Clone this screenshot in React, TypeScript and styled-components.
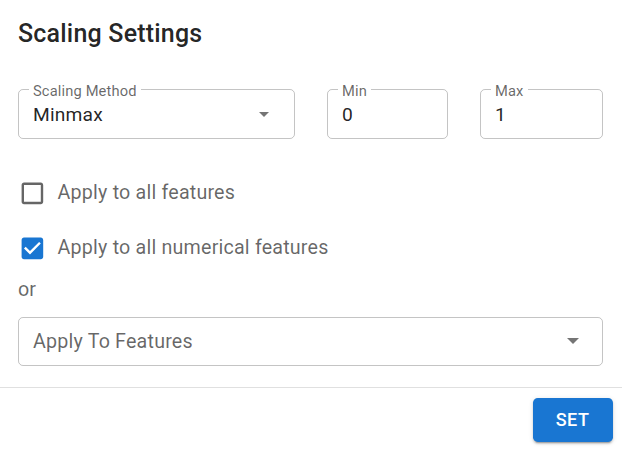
import React from "react";
import styled, { createGlobalStyle } from "styled-components";

const Global = createGlobalStyle`
  html, body { margin: 0; padding: 0; background: #fff; }
  body { font-family: Roboto, "Liberation Sans", Arial, sans-serif; }
  * { box-sizing: border-box; }
`;

const Dialog = styled.div`
  width: 622px;
  height: 452px;
  background: #fff;
  display: flex;
  flex-direction: column;
  font-family: Roboto, "Liberation Sans", Arial, sans-serif;
`;

const Title = styled.h2`
  margin: 0;
  padding: 18px 18px 0;
  font-size: 25px;
  line-height: 32px;
  font-weight: 500;
  letter-spacing: 0.2px;
  color: rgba(0, 0, 0, 0.87);
`;

const Content = styled.div`
  padding: 29px 19px 21px 18px;
  display: flex;
  flex-direction: column;
`;

const FieldRow = styled.div`
  display: grid;
  grid-template-columns: 277px 121px 1fr;
  column-gap: 32px;
  align-items: start;
`;

const Field = styled.fieldset`
  margin: 0;
  min-width: 0;
  padding: 4px 14px 12px;
  border: 1px solid rgba(0, 0, 0, 0.23);
  border-radius: 5px;
`;

const Legend = styled.legend`
  margin-left: -4px;
  padding: 4px 4px 0;
  font-size: 14.7px;
  line-height: 16px;
  color: rgba(0, 0, 0, 0.6);
  letter-spacing: 0.00938em;
`;

const ValueLine = styled.div<{ $padRight?: number }>`
  display: flex;
  align-items: center;
  justify-content: space-between;
  padding-right: ${(p) => p.$padRight ?? 0}px;
  font-size: 19.2px;
  line-height: 23px;
  color: rgba(0, 0, 0, 0.87);
  letter-spacing: 0.00938em;
`;

const Arrow = ({ w }: { w: number }) => (
  <svg width={w} height={w / 2} viewBox="0 0 10 5" style={{ display: "block" }}>
    <path d="M0 0 L5 5 L10 0 Z" fill="rgba(0,0,0,0.54)" />
  </svg>
);

const CheckRow = styled.label<{ $mt?: number }>`
  display: flex;
  align-items: center;
  margin-top: ${(p) => p.$mt ?? 0}px;
  font-size: 19.7px;
  line-height: 28.8px;
  color: rgba(0, 0, 0, 0.6);
  letter-spacing: 0.00938em;
`;

const CheckWrap = styled.span`
  display: inline-flex;
  padding: 10.8px;
  margin-left: -10.8px;
`;

const CheckIcon = ({ checked }: { checked: boolean }) => (
  <svg width="28.8" height="28.8" viewBox="0 0 24 24" style={{ display: "block" }}>
    {checked ? (
      <path
        fill="#1976d2"
        d="M19 3H5c-1.11 0-2 .9-2 2v14c0 1.1.89 2 2 2h14c1.1 0 2-.9 2-2V5c0-1.1-.9-2-2-2zm-9 14l-5-5 1.41-1.41L10 14.17l7.59-7.59L19 8l-9 9z"
      />
    ) : (
      <path
        fill="rgba(0,0,0,0.6)"
        d="M19 5v14H5V5h14m0-2H5c-1.11 0-2 .9-2 2v14c0 1.1.89 2 2 2h14c1.1 0 2-.9 2-2V5c0-1.1-.9-2-2-2z"
      />
    )}
  </svg>
);

const OrText = styled.div`
  margin-top: 2px;
  font-size: 19.7px;
  line-height: 28.8px;
  color: rgba(0, 0, 0, 0.6);
`;

const SelectBox = styled.div`
  margin-top: 12px;
  height: 49px;
  width: 585px;
  border: 1px solid rgba(0, 0, 0, 0.23);
  border-radius: 5px;
  padding: 0 23px 0 14px;
  display: flex;
  align-items: center;
  justify-content: space-between;
  font-size: 19.7px;
  color: rgba(0, 0, 0, 0.6);
  letter-spacing: 0.00938em;
`;

const Actions = styled.div`
  border-top: 1px solid #e0e0e0;
  padding: 10px 9.5px 0;
  display: flex;
  justify-content: flex-end;
`;

const Button = styled.button`
  width: 80px;
  height: 44.5px;
  border: none;
  border-radius: 4.8px;
  background: #1976d2;
  color: #fff;
  font-family: Roboto, "Liberation Sans", Arial, sans-serif;
  font-weight: 500;
  font-size: 18px;
  letter-spacing: 0.5px;
  text-transform: uppercase;
  box-shadow: 0px 3px 1px -2px rgba(0, 0, 0, 0.2), 0px 2px 2px 0px rgba(0, 0, 0, 0.14),
    0px 1px 5px 0px rgba(0, 0, 0, 0.12);
  cursor: pointer;
`;

export default function App() {
  return (
    <>
      <Global />
      <Dialog>
        <Title>Scaling Settings</Title>
        <Content>
          <FieldRow>
            <Field>
              <Legend>Scaling Method</Legend>
              <ValueLine $padRight={11}>
                <span>Minmax</span>
                <Arrow w={10} />
              </ValueLine>
            </Field>
            <Field>
              <Legend>Min</Legend>
              <ValueLine>
                <span>0</span>
              </ValueLine>
            </Field>
            <Field>
              <Legend>Max</Legend>
              <ValueLine>
                <span>1</span>
              </ValueLine>
            </Field>
          </FieldRow>
          <CheckRow $mt={29}>
            <CheckWrap>
              <CheckIcon checked={false} />
            </CheckWrap>
            Apply to all features
          </CheckRow>
          <CheckRow $mt={5}>
            <CheckWrap>
              <CheckIcon checked={true} />
            </CheckWrap>
            Apply to all numerical features
          </CheckRow>
          <OrText>or</OrText>
          <SelectBox>
            <span>Apply To Features</span>
            <Arrow w={12} />
          </SelectBox>
        </Content>
        <Actions>
          <Button>Set</Button>
        </Actions>
      </Dialog>
    </>
  );
}
